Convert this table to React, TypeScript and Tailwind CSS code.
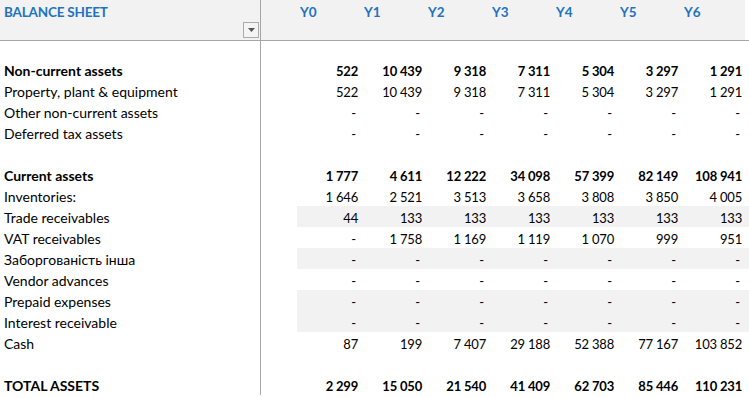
import React from "react";

type Row = {
  label: string;
  values?: string[];
  bold?: boolean;
  band?: boolean;
  blank?: boolean;
};

const D = ["-", "-", "-", "-", "-", "-", "-"];

const rows: Row[] = [
  { label: "Non-current assets", bold: true, values: ["522", "10 439", "9 318", "7 311", "5 304", "3 297", "1 291"] },
  { label: "Property, plant & equipment", values: ["522", "10 439", "9 318", "7 311", "5 304", "3 297", "1 291"] },
  { label: "Other non-current assets", values: D },
  { label: "Deferred tax assets", values: D },
  { label: "", blank: true },
  { label: "Current assets", bold: true, values: ["1 777", "4 611", "12 222", "34 098", "57 399", "82 149", "108 941"] },
  { label: "Inventories:", values: ["1 646", "2 521", "3 513", "3 658", "3 808", "3 850", "4 005"] },
  { label: "Trade receivables", band: true, values: ["44", "133", "133", "133", "133", "133", "133"] },
  { label: "VAT receivables", values: ["-", "1 758", "1 169", "1 119", "1 070", "999", "951"] },
  { label: "Заборгованість інша", band: true, values: D },
  { label: "Vendor advances", values: D },
  { label: "Prepaid expenses", band: true, values: D },
  { label: "Interest receivable", band: true, values: D },
  { label: "Cash", values: ["87", "199", "7 407", "29 188", "52 388", "77 167", "103 852"] },
  { label: "", blank: true },
  { label: "TOTAL ASSETS", bold: true, values: ["2 299", "15 050", "21 540", "41 409", "62 703", "85 446", "110 231"] },
];

const years = ["Y0", "Y1", "Y2", "Y3", "Y4", "Y5", "Y6"];

export default function App() {
  return (
    <div
      className="w-[749px] h-[398px] overflow-hidden bg-white text-black text-[13px]"
      style={{ fontFamily: "Lato, 'Noto Sans', sans-serif" }}
    >
      {/* header */}
      <div className="flex h-[41px] border-b border-[#a6a6a6]">
        <div className="relative w-[261px] shrink-0 bg-[#f2f2f2] border-r border-[#a6a6a6]">
          <div className="pl-[4px] pt-[4px] font-bold text-[13.5px] text-[#1f73c1] leading-[16px] tracking-[-0.2px]">BALANCE SHEET</div>
          <div className="absolute left-[243px] top-[22px] w-[16px] h-[16px] border border-[#ababab] bg-[#f4f4f4] flex items-center justify-center">
            <svg width="7" height="4" viewBox="0 0 7 4">
              <path d="M0 0 L7 0 L3.5 4 Z" fill="#555" />
            </svg>
          </div>
        </div>
        <div className="w-[36px] shrink-0 bg-[#f2f2f2]" />
        {years.map((y) => (
          <div key={y} className="w-[64px] shrink-0 bg-[#f2f2f2] pl-[3px] pt-[4px] font-bold text-[13.5px] text-[#1f73c1] leading-[16px]">
            {y}
          </div>
        ))}
        <div className="flex-1 bg-white" />
      </div>
      <div className="flex h-[18px]">
        <div className="w-[261px] shrink-0 border-r border-[#a6a6a6]" />
      </div>
      {rows.map((r, i) => (
        <div key={i} className={`flex h-[21px] ${r.bold ? "font-bold" : ""}`}>
          <div className="w-[261px] shrink-0 border-r border-[#a6a6a6] pl-[4px] pt-[3px] text-[14px] leading-[17px] whitespace-nowrap">
            {r.label}
          </div>
          <div className="w-[36px] shrink-0" />
          {years.map((y, j) => (
            <div
              key={y}
              className={`w-[64px] shrink-0 text-right pt-[4px] leading-[16px] tracking-[-0.2px] whitespace-nowrap ${r.band ? "bg-[#f2f2f2]" : ""} ${r.values && r.values[j] === "-" ? "pr-[5px]" : "pr-[3px]"}`}
            >
              {r.values ? r.values[j] : ""}
            </div>
          ))}
          <div className={`flex-1 ${r.band ? "bg-[#f2f2f2]" : ""}`} />
        </div>
      ))}
    </div>
  );
}
